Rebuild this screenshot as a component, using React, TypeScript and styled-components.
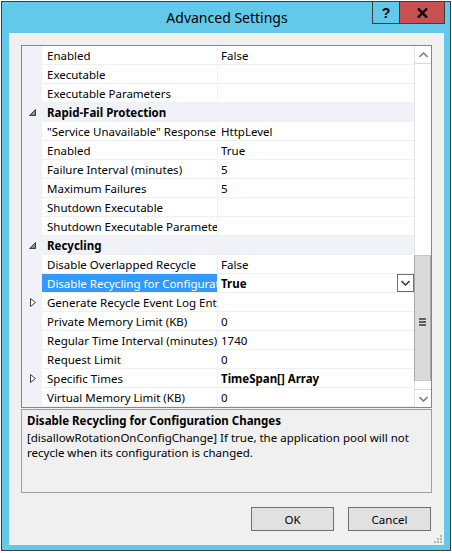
import React from 'react';
import styled, { createGlobalStyle } from 'styled-components';

const FONT = `"Noto Sans", "DejaVu Sans", sans-serif`;

const FRAME = '#62c9ea';
const CLIENT = '#f0f0f0';
const GUTTER = '#f0f2f7';
const LINE = '#f0f0f0';

interface Property {
  name: string;
  value?: string;
  category?: boolean;
  expandable?: boolean;
  selected?: boolean;
  bold?: boolean;
}

const properties: Property[] = [
  { name: 'Enabled', value: 'False' },
  { name: 'Executable' },
  { name: 'Executable Parameters' },
  { name: 'Rapid-Fail Protection', category: true },
  { name: '"Service Unavailable" Response Type', value: 'HttpLevel' },
  { name: 'Enabled', value: 'True' },
  { name: 'Failure Interval (minutes)', value: '5' },
  { name: 'Maximum Failures', value: '5' },
  { name: 'Shutdown Executable' },
  { name: 'Shutdown Executable Parameters' },
  { name: 'Recycling', category: true },
  { name: 'Disable Overlapped Recycle', value: 'False' },
  { name: 'Disable Recycling for Configuration Changes', value: 'True', selected: true, bold: true },
  { name: 'Generate Recycle Event Log Entry', expandable: true },
  { name: 'Private Memory Limit (KB)', value: '0' },
  { name: 'Regular Time Interval (minutes)', value: '1740' },
  { name: 'Request Limit', value: '0' },
  { name: 'Specific Times', value: 'TimeSpan[] Array', expandable: true, bold: true },
  { name: 'Virtual Memory Limit (KB)', value: '0' },
];

const GlobalStyle = createGlobalStyle`
  html, body {
    margin: 0;
    padding: 0;
    background: #ffffff;
  }
  body {
    font-family: ${FONT};
    color: #000000;
  }
  * {
    box-sizing: border-box;
  }
`;

const ExpandedGlyph = () => (
  <svg width="7" height="7" viewBox="0 0 7 7">
    <polygon points="6.5,0.5 6.5,6.5 0.5,6.5" fill="#8c8c8c" stroke="#3f3f3f" strokeWidth="1" />
  </svg>
);

const CollapsedGlyph = () => (
  <svg width="6" height="9" viewBox="0 0 6 9">
    <polygon points="0.5,0.5 5.5,4.5 0.5,8.5" fill="#ffffff" stroke="#3f3f3f" strokeWidth="1" />
  </svg>
);

const Chevron = ({ up, color = '#606060' }: { up?: boolean; color?: string }) => (
  <svg width="9" height="6" viewBox="0 0 9 6">
    <polyline
      points={up ? '0.5,5 4.5,1 8.5,5' : '0.5,1 4.5,5 8.5,1'}
      fill="none"
      stroke={color}
      strokeWidth="1.6"
    />
  </svg>
);

const CloseGlyph = () => (
  <svg width="11" height="10" viewBox="0 0 11 10">
    <path d="M1 0.5 L10 9.5 M10 0.5 L1 9.5" stroke="#000" strokeWidth="2.4" />
  </svg>
);

const App: React.FC = () => {
  return (
    <>
      <GlobalStyle />
      <Window>
        <TitleBar>
          <Caption>Advanced Settings</Caption>
          <CaptionButtons>
            <HelpButton>?</HelpButton>
            <CloseButton>
              <CloseGlyph />
            </CloseButton>
          </CaptionButtons>
        </TitleBar>
        <Client>
          <PropGrid>
            <Rows>
              {properties.map((p, i) => (
                <Row key={i}>
                  <Gutter>
                    {p.category && <ExpandedGlyph />}
                    {p.expandable && <CollapsedGlyph />}
                  </Gutter>
                  {p.category ? (
                    <CategoryCell>{p.name}</CategoryCell>
                  ) : (
                    <>
                      <NameCell $selected={p.selected}>{p.name}</NameCell>
                      <ValueCell $bold={p.bold}>
                        <ValueText>{p.value}</ValueText>
                        {p.selected && (
                          <DropButton>
                            <Chevron color="#404040" />
                          </DropButton>
                        )}
                      </ValueCell>
                    </>
                  )}
                </Row>
              ))}
            </Rows>
            <ScrollBar>
              <ScrollArrow>
                <Chevron up color="#808080" />
              </ScrollArrow>
              <Track>
                <Thumb>
                  <Gripper>
                    <span />
                    <span />
                    <span />
                  </Gripper>
                </Thumb>
              </Track>
              <ScrollArrow $bottom>
                <Chevron color="#808080" />
              </ScrollArrow>
            </ScrollBar>
          </PropGrid>
          <Description>
            <DescTitle>Disable Recycling for Configuration Changes</DescTitle>
            <DescText>
              [disallowRotationOnConfigChange] If true, the application pool will not
              <br />
              recycle when its configuration is changed.
            </DescText>
          </Description>
          <ButtonBar>
            <DialogButton>OK</DialogButton>
            <DialogButton>Cancel</DialogButton>
          </ButtonBar>
          <Grip width="8" height="8" viewBox="0 0 8 8">
            <rect x="6" y="0" width="2" height="2" fill="#b4b4b4" />
            <rect x="3" y="3" width="2" height="2" fill="#b4b4b4" />
            <rect x="6" y="3" width="2" height="2" fill="#b4b4b4" />
            <rect x="0" y="6" width="2" height="2" fill="#b4b4b4" />
            <rect x="3" y="6" width="2" height="2" fill="#b4b4b4" />
            <rect x="6" y="6" width="2" height="2" fill="#b4b4b4" />
          </Grip>
        </Client>
      </Window>
    </>
  );
};

const Window = styled.div`
  width: 450px;
  height: 550px;
  margin: 1px 0 0 1px;
  border: 1px solid #3c3c3c;
  background: ${FRAME};
  display: flex;
  flex-direction: column;
  padding-bottom: 5px;
`;

const TitleBar = styled.div`
  height: 31px;
  flex: none;
  display: grid;
  grid-template-columns: 1fr auto 1fr;
  align-items: start;
  padding: 0 5px 0 7px;
`;

const Caption = styled.div`
  grid-column: 2;
  font-size: 14px;
  line-height: 31px;
  color: #000000;
  white-space: nowrap;
`;

const CaptionButtons = styled.div`
  grid-column: 3;
  justify-self: end;
  display: flex;
  height: 22px;
  border: 1px solid #3c3c3c;
  border-top: none;
`;

const HelpButton = styled.div`
  width: 27px;
  border-right: 1px solid #3c3c3c;
  display: flex;
  align-items: center;
  justify-content: center;
  font-family: "Liberation Sans", Arial, sans-serif;
  font-weight: bold;
  font-size: 14px;
`;

const CloseButton = styled.div`
  width: 44px;
  background: #c75050;
  display: flex;
  align-items: center;
  justify-content: center;
`;

const Client = styled.div`
  flex: 1;
  position: relative;
  margin: 0 6px 0 7px;
  background: ${CLIENT};
  padding: 12px 12px 0 12px;
  display: flex;
  flex-direction: column;
`;

const PropGrid = styled.div`
  height: 363px;
  flex: none;
  display: flex;
  border: 1px solid #828790;
  background: #ffffff;
`;

const Rows = styled.div`
  flex: 1;
  display: flex;
  flex-direction: column;
  min-width: 0;
`;

const Row = styled.div`
  display: flex;
  height: 19px;
  font-size: 11.5px;
  line-height: 18px;
`;

const Gutter = styled.div`
  width: 20px;
  flex: none;
  background: ${GUTTER};
  display: flex;
  align-items: center;
  justify-content: center;
  padding-left: 1px;
`;

const NameCell = styled.div<{ $selected?: boolean }>`
  width: 176px;
  flex: none;
  padding: 1px 0 0 5px;
  border-right: 1px solid ${LINE};
  border-bottom: 1px solid ${LINE};
  white-space: nowrap;
  overflow: hidden;
  text-overflow: clip;
  background: ${p => (p.$selected ? '#3399ff' : '#ffffff')};
  color: ${p => (p.$selected ? '#ffffff' : '#000000')};
`;

const ValueCell = styled.div<{ $bold?: boolean }>`
  flex: 1;
  min-width: 0;
  display: flex;
  justify-content: space-between;
  align-items: stretch;
  padding-left: 3px;
  border-bottom: 1px solid ${LINE};
  font-weight: ${p => (p.$bold ? 'bold' : 'normal')};
  white-space: nowrap;
  overflow: hidden;
`;

const ValueText = styled.span`
  padding-top: 1px;
`;

const CategoryCell = styled.div`
  flex: 1;
  padding: 1px 0 0 5px;
  background: ${GUTTER};
  border-bottom: 1px solid ${LINE};
  font-weight: bold;
  white-space: nowrap;
`;

const DropButton = styled.div`
  width: 17px;
  height: 18px;
  border: 1px solid #707070;
  background: #ffffff;
  display: flex;
  align-items: center;
  justify-content: center;
`;

const ScrollBar = styled.div`
  width: 17px;
  flex: none;
  display: flex;
  flex-direction: column;
  background: #ffffff;
  border-left: 1px solid #e2e2e2;
`;

const ScrollArrow = styled.div<{ $bottom?: boolean }>`
  height: 18px;
  flex: none;
  display: flex;
  align-items: center;
  justify-content: center;
  border-${p => (p.$bottom ? 'top' : 'bottom')}: 1px solid #d9d9d9;
`;

const Track = styled.div`
  flex: 1;
  display: flex;
  flex-direction: column;
  justify-content: flex-end;
  padding-bottom: 8px;
`;

const Thumb = styled.div`
  height: 126px;
  margin-left: -1px;
  background: #dadada;
  border: 1px solid #a8a8a8;
  border-top-color: #c8c8c8;
  border-bottom-color: #c8c8c8;
  display: flex;
  align-items: center;
  justify-content: center;
`;

const Gripper = styled.div`
  display: flex;
  flex-direction: column;
  gap: 1px;
  margin-top: 8px;
  span {
    display: block;
    width: 7px;
    height: 2px;
    background: #606060;
  }
`;

const Description = styled.div`
  height: 84px;
  flex: none;
  margin-top: 1px;
  border: 1px solid #a0a0a0;
  background: ${CLIENT};
  padding: 3px 5px 0 5px;
  font-size: 11.5px;
`;

const DescTitle = styled.div`
  font-weight: bold;
  line-height: 16px;
  white-space: nowrap;
`;

const DescText = styled.div`
  margin-top: 1px;
  line-height: 15px;
  white-space: nowrap;
`;

const ButtonBar = styled.div`
  display: flex;
  justify-content: flex-end;
  gap: 14px;
  margin-top: 14px;
  padding-right: 1px;
`;

const DialogButton = styled.button`
  width: 83px;
  height: 24px;
  border: 1px solid #707070;
  background: #e1e1e1;
  font-family: ${FONT};
  font-size: 11.5px;
  color: #000000;
  padding: 0;
  border-radius: 0;
`;

const Grip = styled.svg`
  position: absolute;
  right: 2px;
  bottom: 2px;
`;

export default App;
